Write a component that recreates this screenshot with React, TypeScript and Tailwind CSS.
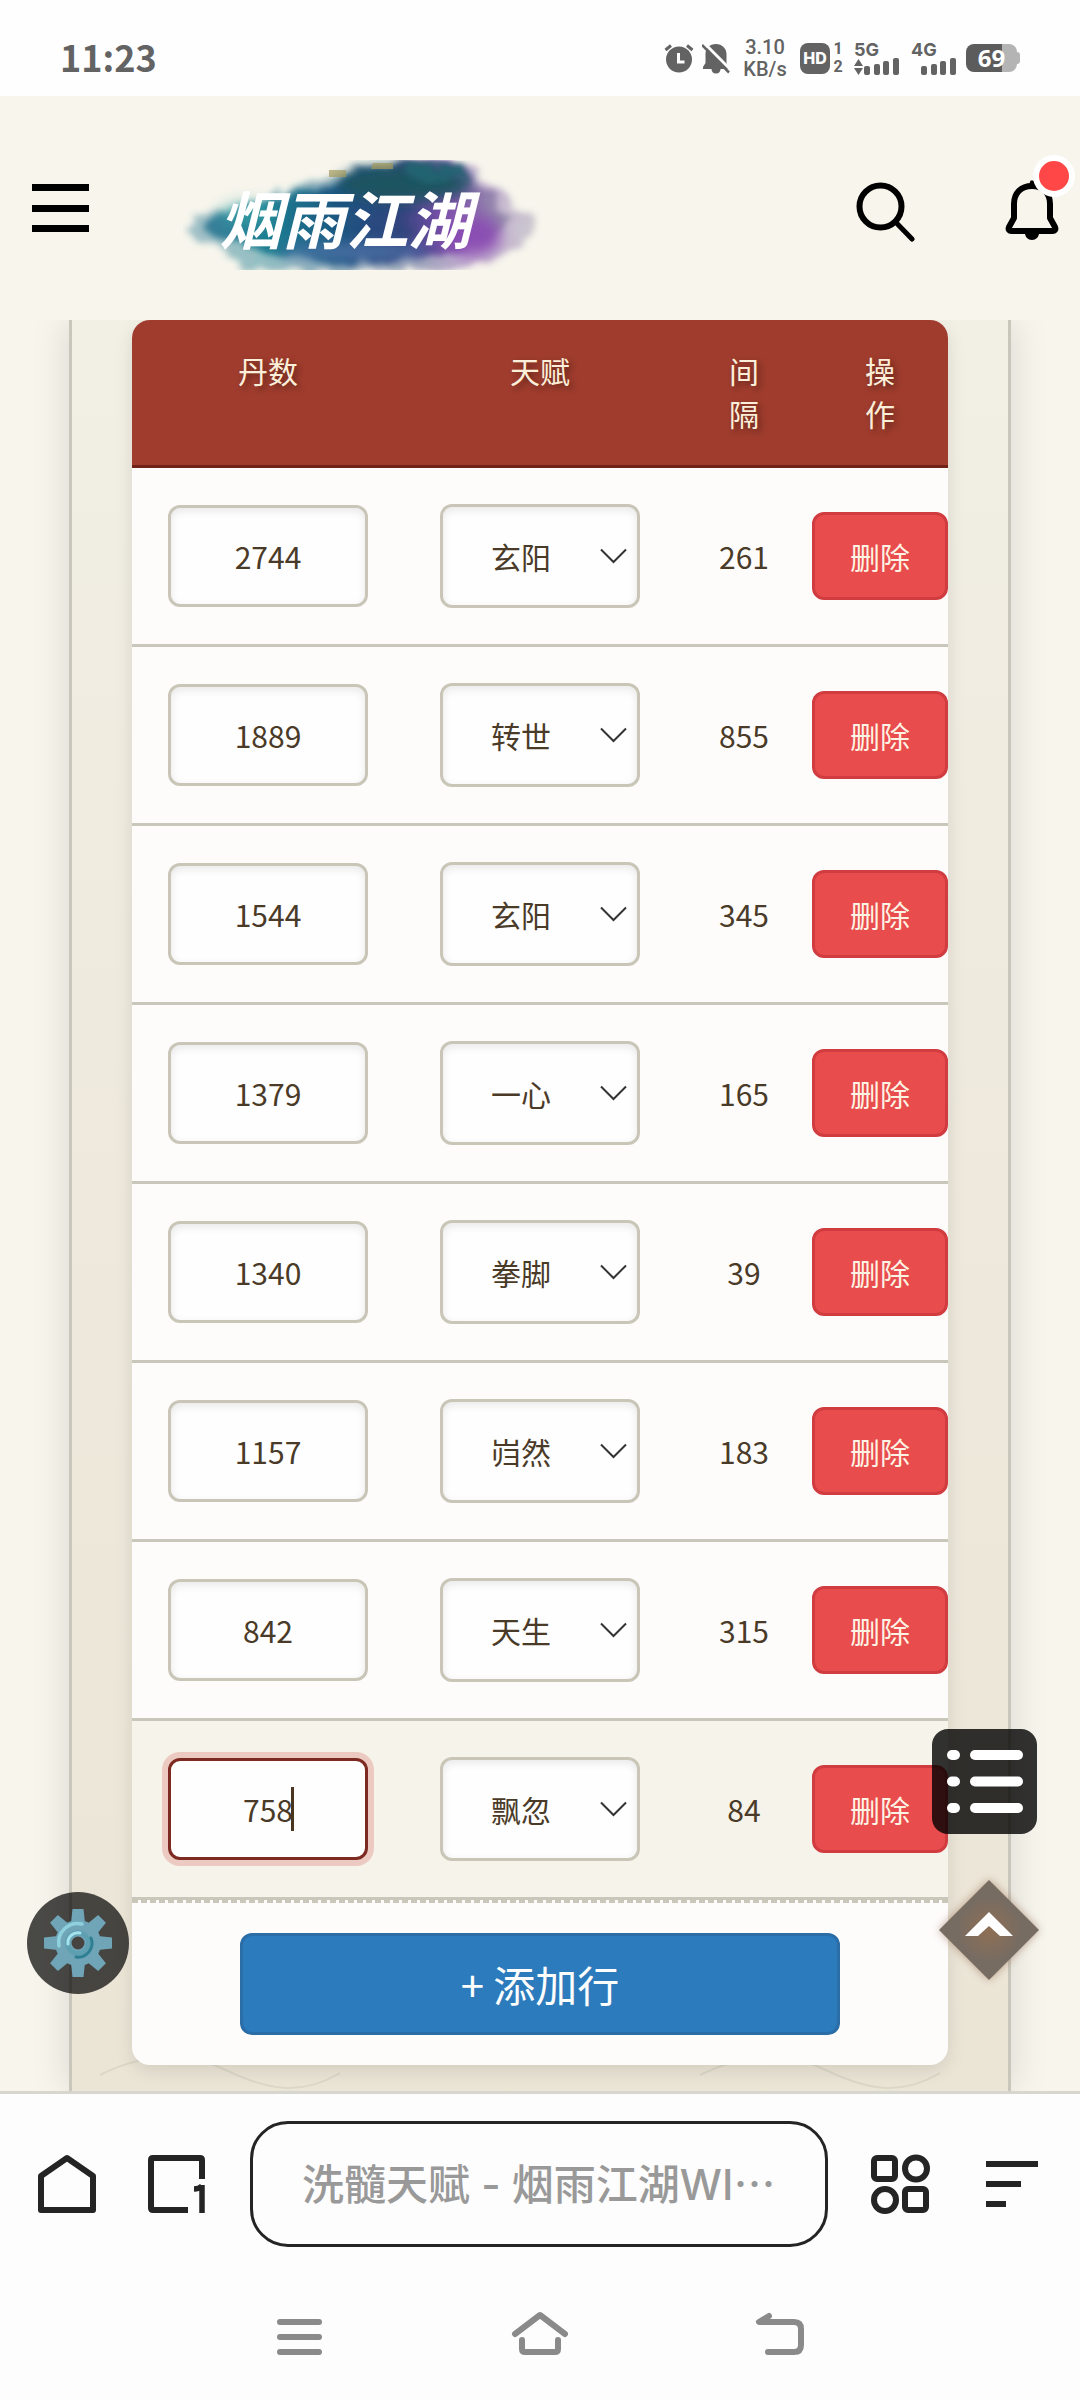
import React, { useState } from "react";

type Row = { id: number; pills: string; talent: string; gap: number };

const INITIAL_ROWS: Row[] = [
  { id: 1, pills: "2744", talent: "玄阳", gap: 261 },
  { id: 2, pills: "1889", talent: "转世", gap: 855 },
  { id: 3, pills: "1544", talent: "玄阳", gap: 345 },
  { id: 4, pills: "1379", talent: "一心", gap: 165 },
  { id: 5, pills: "1340", talent: "拳脚", gap: 39 },
  { id: 6, pills: "1157", talent: "岿然", gap: 183 },
  { id: 7, pills: "842", talent: "天生", gap: 315 },
  { id: 8, pills: "758", talent: "飘忽", gap: 84 },
];

const TALENTS = ["玄阳", "转世", "一心", "拳脚", "岿然", "天生", "飘忽"];

function AlarmIcon() {
  return (
    <svg className="h-[30px] w-[30px]" viewBox="0 0 30 30" fill="none" aria-hidden="true">
      <circle cx="15" cy="16.5" r="13" fill="#636363" />
      <path d="M1.5 7 7 2.5M28.5 7 23 2.5" stroke="#636363" strokeWidth="3" />
      <path d="M14.5 10v9h6" stroke="#fff" strokeWidth="3" />
    </svg>
  );
}

function BellOffIcon() {
  return (
    <svg className="h-[31px] w-[28px]" viewBox="0 0 28 31" fill="none" aria-hidden="true">
      <path d="M14 1C7.500 1 3.500 5.500 3.500 11v9L1 24v2h8.500c0 2.500 1.500 4.500 4.500 4.500s4.500-2 4.500-4.500H26v-2l-1.500-4v-9C24.500 5.500 20 1 14 1Z" fill="#636363" />
      <path d="M2 0 29 27" stroke="#fff" strokeWidth="3" />
      <path d="M0 2 27 29.500" stroke="#636363" strokeWidth="2.500" />
    </svg>
  );
}

function Signal({ arrows }: { arrows?: boolean }) {
  return (
    <svg className="h-[17px] w-[45px]" viewBox="0 0 45 17" fill="#636363" aria-hidden="true">
      {arrows && <path d="M0 8 4.500 1 9 8ZM0 10h9l-4.500 7Z" />}
      <rect x="10" y="8" width="6" height="9" rx="2" />
      <rect x="20" y="6" width="6" height="11" rx="2" />
      <rect x="29" y="3" width="6" height="14" rx="2" />
      <rect x="39" y="0" width="6" height="17" rx="2" />
    </svg>
  );
}

function StatusBar() {
  return (
    <div className="flex h-24 items-center justify-between bg-[#fefefe] pt-5 pr-[60px] pl-[60px] text-[#636363]">
      <time className="pb-1 font-['Noto_Sans_CJK_SC',sans-serif] text-[36px] leading-9 font-bold">11:23</time>
      <div className="flex items-center">
        <AlarmIcon />
        <div className="ml-2">
          <BellOffIcon />
        </div>
        <div className="ml-3 w-[46px] text-center font-['Roboto',sans-serif] text-xl leading-[22px] font-medium">
          <div>3.10</div>
          <div>KB/s</div>
        </div>
        <div className="ml-3 flex h-[31px] w-[30px] items-center justify-center rounded-lg bg-[#636363] font-['Inter',sans-serif] text-base font-extrabold text-white">
          HD
        </div>
        <div className="ml-0.5 w-3 text-center font-['Roboto',sans-serif] text-base leading-[18px] font-bold">
          <div>1</div>
          <div>2</div>
        </div>
        <div className="ml-2.5 font-['Inter',sans-serif] text-lg leading-4 font-bold">
          <div>5G</div>
          <Signal arrows />
        </div>
        <div className="ml-3 font-['Inter',sans-serif] text-lg leading-4 font-bold">
          <div>4G</div>
          <Signal />
        </div>
        <div className="ml-2.5 flex items-center">
          <div className="flex h-[28px] w-[51px] items-center justify-center rounded-lg bg-linear-to-r from-[#5c5c5c] from-70% to-[#b4b4b4] to-70% font-['Open_Sans',sans-serif] text-[24px] leading-7 font-bold text-white">
            69
          </div>
          <div className="h-3 w-[3px] rounded-r bg-[#b4b4b4]" />
        </div>
      </div>
    </div>
  );
}

function Logo() {
  return (
    <svg className="h-[112px] w-[368px]" viewBox="0 0 368 112" role="img" aria-label="烟雨江湖">
      <defs>
        <linearGradient id="ink" x1="0" x2="1" y1="0" y2="0">
          <stop offset="0" stopColor="#3c7f9a" />
          <stop offset="0.2" stopColor="#1d7f92" />
          <stop offset="0.45" stopColor="#1d5480" />
          <stop offset="0.65" stopColor="#34437f" />
          <stop offset="0.8" stopColor="#7d51ab" />
          <stop offset="1" stopColor="#9a93ad" />
        </linearGradient>
        <filter id="wash" x="-20%" y="-30%" width="140%" height="160%">
          <feTurbulence type="fractalNoise" baseFrequency="0.03 0.06" numOctaves="4" seed="7" result="n" />
          <feDisplacementMap in="SourceGraphic" in2="n" scale="22" xChannelSelector="R" yChannelSelector="G" />
          <feGaussianBlur stdDeviation="3" />
        </filter>
        <filter id="soft" x="-30%" y="-60%" width="160%" height="220%">
          <feGaussianBlur stdDeviation="7" />
        </filter>
        <clipPath id="frame">
          <rect x="0" y="2" width="368" height="110" />
        </clipPath>
      </defs>
      <g clipPath="url(#frame)">
        <g filter="url(#wash)">
          <path d="M4 70C30 50 60 40 110 32 150 14 200 4 270 4c24 6 44 26 58 44 14 8 22 12 28 20-10 10-30 24-46 32-20 12-60 14-90 10-50 6-110 8-150 2C50 106 18 84 4 70Z" fill="url(#ink)" opacity="0.45" />
          <path d="M24 68c24-24 60-30 106-34 40-18 90-32 144-28 22 16 38 38 50 54-14 20-28 30-56 36-50 6-110 10-160 4-36-6-66-14-84-32Z" fill="url(#ink)" />
        </g>
        <g filter="url(#soft)">
          <ellipse cx="222" cy="26" rx="66" ry="18" fill="#1c5560" />
          <ellipse cx="170" cy="94" rx="75" ry="9" fill="#5376aa" opacity="0.8" />
          <ellipse cx="290" cy="78" rx="28" ry="20" fill="#8b4bb4" opacity="0.9" />
          <ellipse cx="65" cy="56" rx="28" ry="12" fill="#3ea5a8" opacity="0.6" />
        </g>
        <g filter="url(#wash)">
          <path d="M225 8h60v14h-60Z" fill="#246471" />
        </g>
        <path d="M146 12h17v7h-17ZM190 5h20v6h-22Z" fill="#a39a5c" opacity="0.7" />
      </g>
      <text x="36" y="86" fontSize="63" fontWeight="700" fontStyle="italic" fill="#fff" fontFamily="'Noto Sans CJK SC', sans-serif">
        烟雨江湖
      </text>
    </svg>
  );
}

function Header() {
  return (
    <header className="flex h-56 items-center pl-8">
      <button type="button" aria-label="菜单" className="flex h-12 w-[57px] flex-col justify-between">
        <span className="h-[7px] w-full bg-black" />
        <span className="h-[7px] w-full bg-black" />
        <span className="h-[7px] w-full bg-black" />
      </button>
      <a href="#home" className="mt-3 ml-[94px]">
        <Logo />
      </a>
      <button type="button" aria-label="搜索" className="mt-2 ml-auto">
        <svg className="h-[62px] w-[60px]" viewBox="0 0 60 62" fill="none" stroke="#000" aria-hidden="true">
          <circle cx="25.500" cy="25.500" r="21" strokeWidth="6" />
          <path d="M41 41.500 57 58" strokeWidth="5" strokeLinecap="round" />
        </svg>
      </button>
      <button type="button" aria-label="通知" className="relative mt-1 mr-[21px] ml-[90px]">
        <svg className="h-[62px] w-[54px]" viewBox="0 0 54 62" fill="none" aria-hidden="true">
          <path d="M27 7C16 7 9 14 9 25v14L4 48c-1 2.500 0 4 2 4h42c2 0 3-1.500 2-4l-5-9V25C45 14 38 7 27 7Z" stroke="#000" strokeWidth="6" strokeLinejoin="round" />
          <path d="M20 54h14c0 4-3 7-7 7s-7-3-7-7ZM24 6l1.500-4.500h3L30 6Z" fill="#000" />
        </svg>
        <span className="absolute -top-[24px] left-7 h-[42px] w-[42px] rounded-full border-[6px] border-white bg-[#ff4747]" />
      </button>
    </header>
  );
}

const FIELD =
  "w-full rounded-xl border-3 bg-[#fefefe] text-[30px] text-[#4a3a28] outline-none";

function TalentRow({
  row,
  active,
  onChange,
  onDelete,
}: {
  row: Row;
  active: boolean;
  onChange: (row: Row) => void;
  onDelete: () => void;
}) {
  const cell = "h-[179px] border-b-3 border-[#c9c6ba] p-0 align-middle";
  return (
    <tr className={active ? "bg-[#f6f3ea]" : "bg-[#fdfcfb]"}>
      <td className={cell}>
        <div className="relative px-9">
          <input
            type="text"
            inputMode="numeric"
            aria-label="丹数"
            value={row.pills}
            onChange={(e) => onChange({ ...row, pills: e.target.value })}
            className={
              FIELD +
              " block h-[102px] text-center " +
              (active
                ? "border-[#7d2a22] shadow-[0_0_0_6px_rgba(200,60,50,0.22)] caret-transparent"
                : "border-[#c9c6b8] shadow-[inset_0_3px_9px_rgba(0,0,0,0.09)]")
            }
          />
          {active && <span className="absolute top-[29px] left-1/2 ml-[23px] h-11 w-[3px] bg-[#4a3520]" />}
        </div>
      </td>
      <td className={cell}>
        <div className="relative px-9">
          <select
            aria-label="天赋"
            value={row.talent}
            onChange={(e) => onChange({ ...row, talent: e.target.value })}
            className={FIELD + " block h-[104px] appearance-none border-[#c9c6b8] pl-12 shadow-[inset_0_3px_9px_rgba(0,0,0,0.09)]"}
          >
            {TALENTS.map((t) => (
              <option key={t}>{t}</option>
            ))}
          </select>
          <svg className="pointer-events-none absolute top-[44px] right-[49px] h-4 w-[27px]" viewBox="0 0 27 16" fill="none" stroke="#333" strokeWidth="2" aria-hidden="true">
            <path d="M1 1.500 13.500 14 26 1.500" />
          </svg>
        </div>
      </td>
      <td className={cell + " text-center text-[30px] text-[#4a3a28]"}>{row.gap}</td>
      <td className={cell}>
        <button
          type="button"
          onClick={onDelete}
          className="block h-[88px] w-full rounded-xl border-3 border-[#d13c40] bg-[#e84c4c] text-[30px] text-[#fdf3e4]"
        >
          删除
        </button>
      </td>
    </tr>
  );
}

function FloatingTools() {
  return (
    <>
      <button type="button" aria-label="设置" className="absolute bottom-[97px] left-[27px] flex h-[102px] w-[102px] items-center justify-center rounded-full bg-black/70">
        <svg className="h-[70px] w-[70px]" viewBox="-35 -35 70 70" fill="none" aria-hidden="true">
          <g fill="#70a5b8">
            <circle r="23" />
            {[0, 45, 90, 135, 180, 225, 270, 315].map((a) => (
              <path key={a} d="M-7-20-5.500-34h11L7-20Z" transform={`rotate(${a})`} />
            ))}
          </g>
          <path d="M-19 3A19 19 0 0 1 4-19" stroke="#8fd0dd" strokeWidth="3.500" strokeLinecap="round" />
          <circle r="10.500" stroke="#5f9fb2" strokeWidth="5" />
          <path d="M-10 1A10 10 0 0 1 2-10" stroke="#a5e3ec" strokeWidth="3" strokeLinecap="round" />
          <path d="M13-5A14 14 0 0 1-2 14" stroke="#2f7f93" strokeWidth="3" strokeLinecap="round" />
          <circle r="6.500" fill="#474340" />
        </svg>
      </button>
      <button type="button" aria-label="目录" className="absolute right-[43px] bottom-[257px] flex h-[105px] w-[105px] items-center justify-center rounded-2xl bg-black/80">
        <svg className="h-[63px] w-[76px]" viewBox="0 0 76 63" fill="#fff" aria-hidden="true">
          {[0, 26.5, 53].map((y) => (
            <g key={y}>
              <rect x="0" y={y} width="13" height="10" rx="5" />
              <rect x="23" y={y} width="53" height="10" rx="5" />
            </g>
          ))}
        </svg>
      </button>
      <button type="button" aria-label="返回顶部" className="absolute right-[36px] bottom-[105px]">
        <svg className="block h-[112px] w-[110px] drop-shadow-[0_0_4px_rgba(120,60,30,0.45)]" viewBox="-55 -56 110 112" aria-hidden="true">
          <defs>
            <radialGradient id="glow" r="0.32">
              <stop offset="0" stopColor="#8f6f55" />
              <stop offset="1" stopColor="#776c62" />
            </radialGradient>
          </defs>
          <path d="M0-50 50 0 0 50-50 0Z" fill="url(#glow)" />
          <path d="M0-18 24 6H11L0-4-11 6h-13Z" fill="#fff" />
        </svg>
      </button>
    </>
  );
}

function Calculator() {
  const [rows, setRows] = useState(INITIAL_ROWS);
  const th = "h-[148px] border-b-3 border-[#6f2218] px-12 pt-[29px] align-top font-normal";
  return (
    <main className="relative">
      <section className="relative mx-[69px] border-x-3 border-[#c9c6bb] bg-linear-to-b from-[#f2efe5] via-[#eee9dc] to-[#ebe5d6] px-[60px] pb-[26px] shadow-[0_0_36px_rgba(0,0,0,0.13)] [clip-path:inset(0_-60px)]">
        <svg className="absolute bottom-0 left-[26px] h-9 w-[250px]" viewBox="0 0 250 36" fill="none" stroke="#dcd8c8" strokeWidth="2" aria-hidden="true">
          <path d="M2 20C50-4 92-2 130 16s72 26 112 2" />
        </svg>
        <svg className="absolute right-[60px] bottom-0 h-9 w-[250px]" viewBox="0 0 250 36" fill="none" stroke="#dcd8c8" strokeWidth="2" aria-hidden="true">
          <path d="M2 20C50-4 92-2 130 16s72 26 112 2" />
        </svg>
        <div className="relative overflow-hidden rounded-[18px] bg-[#fdfcfb] shadow-[0_6px_18px_rgba(0,0,0,0.1)]">
          <table className="w-full table-fixed border-separate border-spacing-0">
            <colgroup>
              <col className="w-1/3" />
              <col className="w-1/3" />
              <col className="w-1/6" />
              <col className="w-1/6" />
            </colgroup>
            <thead className="bg-[#9f3c2d] text-[30px] leading-[43px] text-[#fcefd9] [text-shadow:3px_3px_6px_rgba(0,0,0,0.4)]">
              <tr>
                <th scope="col" className={th}>丹数</th>
                <th scope="col" className={th}>天赋</th>
                <th scope="col" className={th}>间隔</th>
                <th scope="col" className={th}>操作</th>
              </tr>
            </thead>
            <tbody>
              {rows.map((row) => (
                <TalentRow
                  key={row.id}
                  row={row}
                  active={row.id === 8}
                  onChange={(next) => setRows(rows.map((r) => (r.id === next.id ? next : r)))}
                  onDelete={() => setRows(rows.filter((r) => r.id !== row.id))}
                />
              ))}
            </tbody>
          </table>
          <div className="border-t-3 border-dashed border-[#c9c6ba] px-[108px] py-[30px]">
            <button
              type="button"
              onClick={() => setRows([...rows, { id: Date.now(), pills: "", talent: "玄阳", gap: 0 }])}
              className="h-[102px] w-full rounded-xl border-3 border-[#2b6da6] bg-[#2c7bbc] text-[42px] leading-[60px] text-[#fdfdfd]"
            >
              + 添加行
            </button>
          </div>
        </div>
      </section>
      <FloatingTools />
    </main>
  );
}

function BrowserBar() {
  return (
    <div className="flex items-center border-t-3 border-[#d8d7cf] bg-[#fefdfd] pt-[27px] pr-[42px] pl-[37px]">
      <button type="button" aria-label="主页">
        <svg className="h-[60px] w-[60px]" viewBox="0 0 60 60" fill="none" stroke="#242424" strokeWidth="6" strokeLinejoin="round" aria-hidden="true">
          <path d="M4 22 30 4l26 18v34H4Z" />
        </svg>
      </button>
      <button type="button" aria-label="标签页" className="ml-[50px]">
        <svg className="h-[60px] w-[60px]" viewBox="0 0 60 60" fill="none" stroke="#242424" strokeWidth="6" aria-hidden="true">
          <path d="M55 25V6q0-2-2-2H6Q4 4 4 6v48q0 2 2 2h35" />
          <path d="M47 35q5 0 8-3M55 31v28" strokeWidth="5.500" />
        </svg>
      </button>
      <button
        type="button"
        className="ml-[43px] h-[126px] min-w-0 flex-1 truncate rounded-[38px] border-3 border-[#242424] pr-3 pl-[49px] text-left font-['Inter','Noto_Sans_CJK_SC',sans-serif] text-[42px] font-medium text-[#999]"
      >
        洗髓天赋 - 烟雨江湖WI⋯
      </button>
      <button type="button" aria-label="应用" className="ml-[42px]">
        <svg className="h-[60px] w-[60px]" viewBox="0 0 60 60" fill="none" stroke="#242424" strokeWidth="6" aria-hidden="true">
          <rect x="4" y="4" width="21" height="21" rx="3" />
          <circle cx="46" cy="14.500" r="11" />
          <circle cx="15" cy="46" r="11" />
          <rect x="35" y="35" width="21" height="21" rx="3" />
        </svg>
      </button>
      <button type="button" aria-label="更多" className="ml-[56px] flex w-[52px] flex-col gap-[14px]">
        <span className="h-[6px] w-[52px] bg-[#242424]" />
        <span className="h-[6px] w-[35px] bg-[#242424]" />
        <span className="h-[6px] w-5 bg-[#242424]" />
      </button>
    </div>
  );
}

function SystemNav() {
  return (
    <nav className="flex flex-1 items-start justify-center gap-[180px] bg-[#fefdfd] pt-[60px]">
      <button type="button" aria-label="最近任务">
        <svg className="h-[54px] w-[60px]" viewBox="0 0 60 54" fill="none" stroke="#8a8a8a" strokeWidth="6" strokeLinecap="round" aria-hidden="true">
          <path d="M10 15h39M10 30h39M10 45h39" />
        </svg>
      </button>
      <button type="button" aria-label="桌面">
        <svg className="h-[54px] w-[60px]" viewBox="0 0 60 54" fill="none" stroke="#8a8a8a" strokeWidth="6" strokeLinecap="round" strokeLinejoin="round" aria-hidden="true">
          <path d="M5 27 30 8l25 19M12 33v9q0 3 3 3h30q3 0 3-3v-9" />
        </svg>
      </button>
      <button type="button" aria-label="返回">
        <svg className="h-[54px] w-[60px]" viewBox="0 0 60 54" fill="none" stroke="#8a8a8a" strokeWidth="6" strokeLinecap="round" strokeLinejoin="round" aria-hidden="true">
          <path d="M19 9 9 15h35q7 0 7 7v16q0 7-7 7H18" />
        </svg>
      </button>
    </nav>
  );
}

export default function App() {
  return (
    <div className="flex min-h-screen flex-col bg-[#f7f5ec] font-['Noto_Sans_CJK_SC',sans-serif]" lang="zh-CN">
      <StatusBar />
      <Header />
      <Calculator />
      <BrowserBar />
      <SystemNav />
    </div>
  );
}
